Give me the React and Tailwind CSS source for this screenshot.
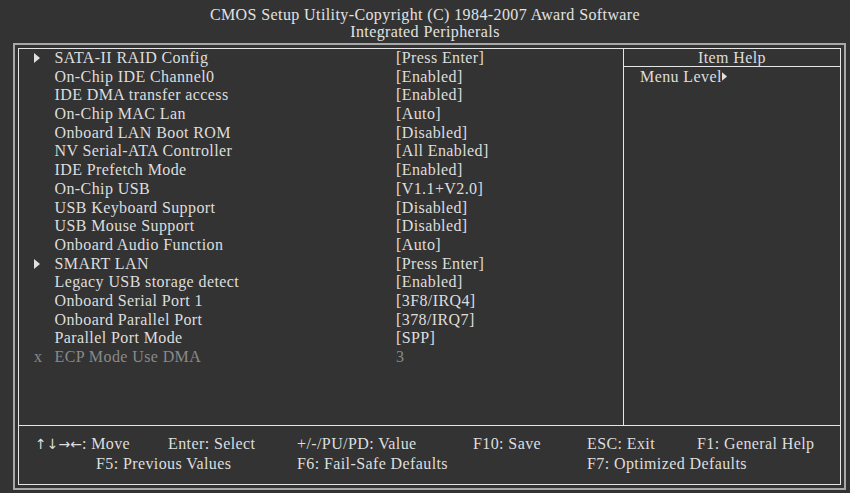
const rows = [
  ['SATA-II RAID Config', '[Press Enter]', 'arrow'],
  ['On-Chip IDE Channel0', '[Enabled]'],
  ['IDE DMA transfer access', '[Enabled]'],
  ['On-Chip MAC Lan', '[Auto]'],
  ['Onboard LAN Boot ROM', '[Disabled]'],
  ['NV Serial-ATA Controller', '[All Enabled]'],
  ['IDE Prefetch Mode', '[Enabled]'],
  ['On-Chip USB', '[V1.1+V2.0]'],
  ['USB Keyboard Support', '[Disabled]'],
  ['USB Mouse Support', '[Disabled]'],
  ['Onboard Audio Function', '[Auto]'],
  ['SMART LAN', '[Press Enter]', 'arrow'],
  ['Legacy USB storage detect', '[Enabled]'],
  ['Onboard Serial Port 1', '[3F8/IRQ4]'],
  ['Onboard Parallel Port', '[378/IRQ7]'],
  ['Parallel Port Mode', '[SPP]'],
  ['ECP Mode Use DMA', '3', 'x'],
];

function Tri({ w = 6, h = 10 }) {
  return (
    <svg width={w} height={h} viewBox="0 0 6 10" className="inline-block">
      <polygon points="0,0 6,5 0,10" fill="#e0e0e0" />
    </svg>
  );
}

export default function App() {
  return (
    <div className="w-[850px] h-[493px] bg-[#333333] text-[#dedede] overflow-hidden font-['Liberation_Serif',serif] text-[16px] tracking-[0.4px]">
      <div className="h-[43px] pt-[6px] text-center leading-[17px] text-[#e2e2e2]">
        <div>CMOS Setup Utility-Copyright (C) 1984-2007 Award Software</div>
        <div>Integrated Peripherals</div>
      </div>
      <div className="ml-[13px] w-[833px] h-[447px] border-2 border-[#a8a8a8] p-[3px]">
        <div className="h-full border border-[#e6e6e6] flex flex-col">
          <div className="h-[376px] flex">
            <div className="w-[605px] border-r border-[#e6e6e6] leading-[18.7px]">
              {rows.map(([label, value, kind], i) => (
                <div key={i} className={`flex h-[18.7px] ${kind === 'x' ? 'text-[#8a8a8a]' : ''}`}>
                  <span className="w-[35.5px] pl-[15px] flex items-center">
                    {kind === 'arrow' ? <Tri /> : kind === 'x' ? <span className="leading-[18.7px]">x</span> : null}
                  </span>
                  <span className="w-[341.5px] whitespace-nowrap">{label}</span>
                  <span className="whitespace-nowrap">{value}</span>
                </div>
              ))}
            </div>
            <div className="flex-1 flex flex-col">
              <div className="h-[18px] leading-[17px] text-center border-b border-[#e6e6e6]">Item Help</div>
              <div className="pl-[16px] leading-[19px] flex items-center whitespace-nowrap">
                <span>Menu Level</span>
                <Tri w={5} h={9} />
              </div>
            </div>
          </div>
          <div className="flex-1 border-t border-[#e6e6e6] pt-[8px] leading-[19px] whitespace-nowrap">
            <div className="flex pl-[16px]">
              <span className="w-[133px]">
                <span className="font-['DejaVu_Sans',sans-serif] text-[14px] tracking-[0px]">↑↓→←</span>: Move
              </span>
              <span className="w-[129px]">Enter: Select</span>
              <span className="w-[176px]">+/-/PU/PD: Value</span>
              <span className="w-[114px]">F10: Save</span>
              <span className="w-[110px]">ESC: Exit</span>
              <span>F1: General Help</span>
            </div>
            <div className="flex pl-[77px]">
              <span className="w-[201px]">F5: Previous Values</span>
              <span className="w-[290px]">F6: Fail-Safe Defaults</span>
              <span>F7: Optimized Defaults</span>
            </div>
          </div>
        </div>
      </div>
    </div>
  );
}
